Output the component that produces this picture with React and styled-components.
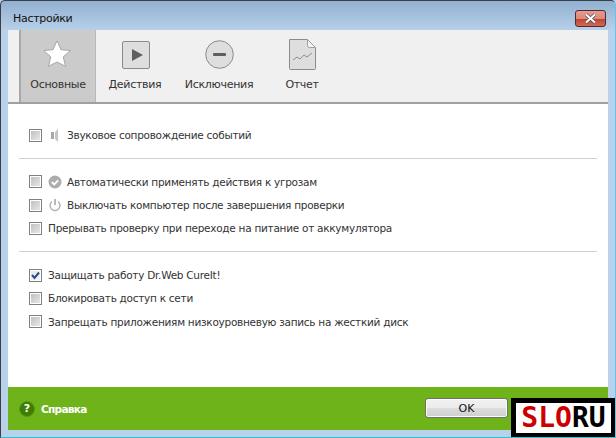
import React from 'react';
import styled, { createGlobalStyle } from 'styled-components';

const GlobalStyle = createGlobalStyle`
  html, body { margin: 0; padding: 0; background: #b9d1ea; }
  body { font-family: "DejaVu Sans", "Liberation Sans", sans-serif; }
`;

const Frame = styled.div`
  position: relative;
  box-sizing: border-box;
  width: 616px;
  height: 438px;
  overflow: hidden;
  display: flex;
  flex-direction: column;
  background: linear-gradient(#92b0d0 0, #b9d1ea 30px);
  border-top: 1px solid #3a3f44;
  border-left: 1px solid #3a3f44;
  border-right: 1px solid #63c6e8;
  border-bottom: 1px solid #26c6da;
  border-top-left-radius: 5px;
  border-top-right-radius: 5px;
`;

const TitleBar = styled.div`
  height: 29px;
  display: flex;
  align-items: flex-start;
  justify-content: space-between;
  padding: 0 9px 0 12px;
  flex: none;
`;

const Title = styled.span`
  font-size: 11px;
  line-height: 14px;
  margin-top: 11px;
  color: #111;
  letter-spacing: -0.3px;
`;

const CloseButton = styled.div`
  box-sizing: border-box;
  width: 31px;
  height: 17px;
  margin-top: 9px;
  border: 1px solid #4f2a34;
  border-radius: 3px;
  background: linear-gradient(#e79a8c 0, #dc8a7c 50%, #c4442e 55%, #cf6a55 100%);
  display: flex;
  align-items: center;
  justify-content: center;
`;

const Body = styled.div`
  width: 600px;
  height: 400px;
  margin-left: 7px;
  background: #fff;
  display: flex;
  flex-direction: column;
  flex: none;
`;

const Toolbar = styled.div`
  height: 72px;
  flex: none;
  display: flex;
  padding-left: 11px;
  background: #f0f0f0;
  border-bottom: 2px solid #a0a0a0;
`;

const Tab = styled.div`
  box-sizing: border-box;
  width: ${({ $width }) => $width}px;
  display: flex;
  flex-direction: column;
  align-items: center;
  padding-top: 9px;
  background: ${({ $active }) => ($active ? '#cbcbcb' : 'transparent')};
  border-left: ${({ $active }) => ($active ? '2px solid #a8a8a8' : 'none')};
  border-right: ${({ $active }) => ($active ? '1px solid #b8b8b8' : 'none')};
`;

const TabIcon = styled.div`
  width: 32px;
  height: 31px;
  display: flex;
  align-items: center;
  justify-content: center;
`;

const TabLabel = styled.span`
  margin-top: 8px;
  font-size: 11px;
  line-height: 14px;
  color: #333;
  letter-spacing: -0.3px;
`;

const Options = styled.div`
  flex: 1;
  padding-top: 19.6px;
  display: flex;
  flex-direction: column;
`;

const Group = styled.div`
  display: flex;
  flex-direction: column;
  padding: 0 0 0 21px;
`;

const Divider = styled.div`
  height: 1px;
  background: #d0d0d0;
  margin: 10.8px 11px 11.5px 11px;
`;

const Row = styled.div`
  height: 23.3px;
  display: flex;
  align-items: center;
`;

const Box = styled.div`
  box-sizing: border-box;
  width: 13px;
  height: 13px;
  border: 1px solid #7f8080;
  padding: 1px;
  background: #fff;
  flex: none;
`;

const BoxFill = styled.div`
  width: 9px;
  height: 9px;
  position: relative;
  background: ${({ $checked }) => ($checked ? 'linear-gradient(135deg, #e4e6ea, #f6f7f8)' : 'linear-gradient(135deg, #bfc1c4, #e6e7e8)')};
`;

const RowIcon = styled.div`
  width: 14px;
  height: 14px;
  margin-left: 6px;
  flex: none;
  display: flex;
  align-items: center;
  justify-content: center;
`;

const RowText = styled.span`
  margin-left: ${({ $iconed }) => ($iconed ? '5px' : '6px')};
  font-size: 10.5px;
  color: #333;
  letter-spacing: -0.27px;
  white-space: nowrap;
`;

const Footer = styled.div`
  height: 43px;
  flex: none;
  background: #6fb31a;
  display: flex;
  align-items: center;
  padding: 0 100px 0 11px;
`;

const HelpIcon = styled.div`
  box-sizing: border-box;
  width: 16px;
  height: 16px;
  border-radius: 50%;
  background: #3c7f00;
  border: 1px solid #5a9a14;
  color: #fff;
  font-size: 11px;
  font-weight: bold;
  display: flex;
  align-items: center;
  justify-content: center;
`;

const HelpText = styled.span`
  margin-left: 6px;
  color: #fff;
  font-size: 10.5px;
  font-weight: bold;
  letter-spacing: -0.7px;
  flex: 1;
`;

const OkButton = styled.button`
  box-sizing: border-box;
  width: 83px;
  height: 20px;
  margin: 0 0 1px;
  padding: 0;
  border: 1px solid #707070;
  border-radius: 3px;
  background: linear-gradient(#f2f2f2 0, #ebebeb 50%, #dddddd 52%, #cfcfcf 100%);
  box-shadow: inset 0 0 0 1px #fbfbfb;
  font-family: inherit;
  font-size: 11px;
  color: #111;
`;

const Logo = styled.div`
  position: absolute;
  right: -1px;
  bottom: -1px;
  box-sizing: border-box;
  width: 105px;
  height: 40px;
  background: #000;
  padding: 5px;
`;

const LogoInner = styled.div`
  height: 100%;
  background: #fff;
  display: flex;
  align-items: center;
  justify-content: center;
  font-family: "DejaVu Sans Mono", "Liberation Mono", monospace;
  font-weight: bold;
  font-size: 28px;
  line-height: 30px;
`;

const LogoPart = styled.span`
  color: ${({ $color }) => $color};
`;

const Star = () => (
  <svg width="28" height="28" viewBox="1 1.5 28 28">
    <path d="M14 1l4 9.200 9.400.8-7.100 6.300 2.200 9.500L14 22.500 5.500 26.800l2.200-9.500L.6 11 10 10.200z" fill="#fff" stroke="#a6a6a6" strokeWidth="1" />
  </svg>
);

const Play = () => (
  <svg width="30" height="28" viewBox="-2 0 30 28">
    <rect x="0.500" y="0.500" width="27" height="27" rx="1.500" fill="#dedede" stroke="#8a8a8a" />
    <path d="M10 8l11 6-11 6z" fill="#5f5f5f" />
  </svg>
);

const Minus = () => (
  <svg width="29" height="29" viewBox="0 0 29 29">
    <circle cx="14.500" cy="14.500" r="13.800" fill="#dedede" stroke="#8a8a8a" />
    <rect x="8" y="13" width="13" height="3" rx="1" fill="#5f5f5f" />
  </svg>
);

const Report = () => (
  <svg width="27" height="31" viewBox="0 0 27 31">
    <path d="M.5.500h18l8 8v21a1 1 0 0 1-1 1H1.500a1 1 0 0 1-1-1z" fill="#dedede" stroke="#8a8a8a" />
    <path d="M18.500.500v6a2 2 0 0 0 2 2h6z" fill="#f4f4f4" stroke="#a0a0a0" />
    <path d="M4 21l4-3 3 2 4-4 3 2 5-4" fill="none" stroke="#7a7a7a" strokeWidth="0.800" />
  </svg>
);

const Speaker = () => (
  <svg width="14" height="14" viewBox="0 0 14 14">
    <rect x="3" y="4" width="3" height="7" fill="#a8a8a8" />
    <path d="M7 4l3-3v13l-3-3z" fill="#c4c4c4" />
  </svg>
);

const CheckBadge = () => (
  <svg width="14" height="14" viewBox="0 0 14 14">
    <circle cx="7" cy="7" r="6.500" fill="#adadad" />
    <path d="M3.800 7l2.400 2.400 4-4" fill="none" stroke="#fff" strokeWidth="1.800" />
  </svg>
);

const Power = () => (
  <svg width="14" height="14" viewBox="0 0 14 14">
    <path d="M4 3.500a5 5 0 1 0 6 0" fill="none" stroke="#b0b0b0" strokeWidth="1.400" />
    <path d="M7 1v6" fill="none" stroke="#9a9a9a" strokeWidth="1.400" />
  </svg>
);

const Tick = () => (
  <svg width="9" height="9" viewBox="0 0 9 9" style={{ position: 'absolute', left: 0, top: 0 }}>
    <path d="M1 4l2.500 3L8 1.500" fill="none" stroke="#2b4a8b" strokeWidth="2" />
  </svg>
);

const CloseGlyph = () => (
  <svg width="13" height="11" viewBox="0 0 13 11">
    <path d="M2 1.500l9 8M11 1.500l-9 8" stroke="#4a4a5a" strokeWidth="3.400" />
    <path d="M2 1.500l9 8M11 1.500l-9 8" stroke="#fff" strokeWidth="2" />
  </svg>
);

const tabs = [
  { label: 'Основные', width: 77, icon: <Star />, active: true },
  { label: 'Действия', width: 78, icon: <Play /> },
  { label: 'Исключения', width: 90, icon: <Minus /> },
  { label: 'Отчет', width: 76, icon: <Report /> },
];

const groups = [
  [{ text: 'Звуковое сопровождение событий', icon: <Speaker /> }],
  [
    { text: 'Автоматически применять действия к угрозам', icon: <CheckBadge /> },
    { text: 'Выключать компьютер после завершения проверки', icon: <Power /> },
    { text: 'Прерывать проверку при переходе на питание от аккумулятора' },
  ],
  [
    { text: 'Защищать работу Dr.Web CureIt!', checked: true },
    { text: 'Блокировать доступ к сети' },
    { text: 'Запрещать приложениям низкоуровневую запись на жесткий диск' },
  ],
];

const App = () => (
  <>
    <GlobalStyle />
    <Frame>
      <TitleBar>
        <Title>Настройки</Title>
        <CloseButton><CloseGlyph /></CloseButton>
      </TitleBar>
      <Body>
        <Toolbar>
          {tabs.map((tab) => (
            <Tab key={tab.label} $width={tab.width} $active={tab.active}>
              <TabIcon>{tab.icon}</TabIcon>
              <TabLabel>{tab.label}</TabLabel>
            </Tab>
          ))}
        </Toolbar>
        <Options>
          {groups.map((rows, i) => (
            <React.Fragment key={i}>
              {i > 0 && <Divider />}
              <Group>
                {rows.map((row) => (
                  <Row key={row.text}>
                    <Box>
                      <BoxFill $checked={row.checked}>{row.checked && <Tick />}</BoxFill>
                    </Box>
                    {row.icon && <RowIcon>{row.icon}</RowIcon>}
                    <RowText $iconed={!!row.icon}>{row.text}</RowText>
                  </Row>
                ))}
              </Group>
            </React.Fragment>
          ))}
        </Options>
        <Footer>
          <HelpIcon>?</HelpIcon>
          <HelpText>Справка</HelpText>
          <OkButton>OK</OkButton>
        </Footer>
      </Body>
      <Logo>
        <LogoInner>
          <LogoPart $color="#cc0000">SLO</LogoPart>
          <LogoPart $color="#000">RU</LogoPart>
        </LogoInner>
      </Logo>
    </Frame>
  </>
);

export default App;
